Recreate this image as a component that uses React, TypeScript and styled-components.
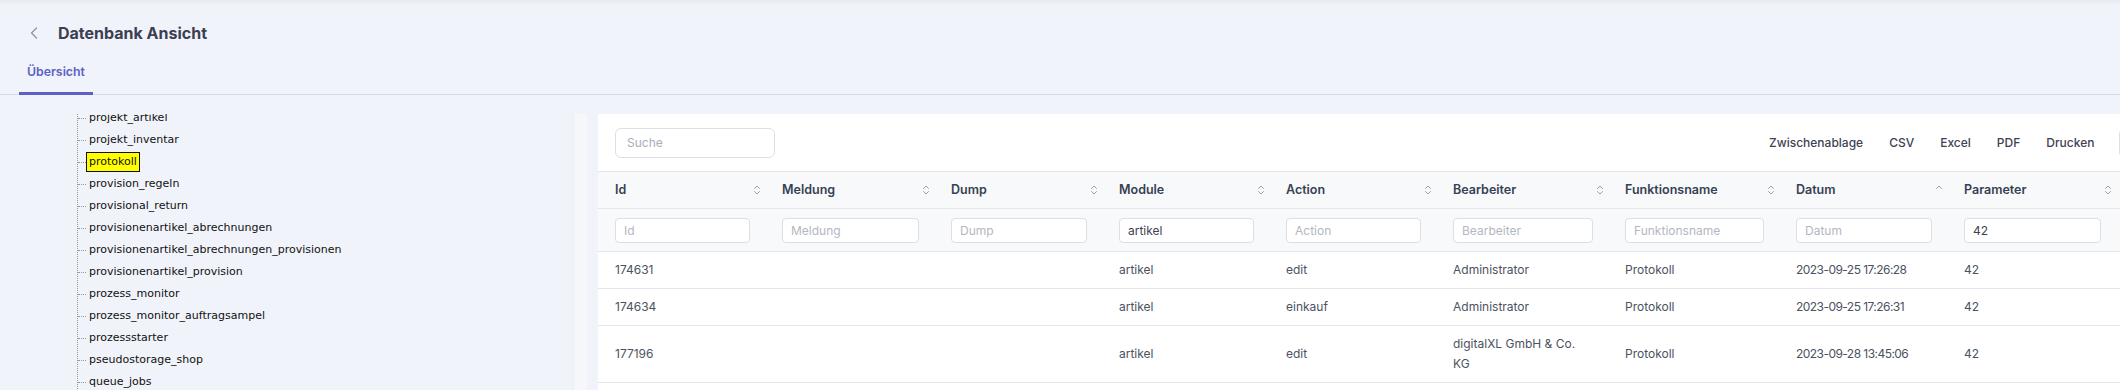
import React from "react";
import styled, { createGlobalStyle } from "styled-components";

const GlobalStyle = createGlobalStyle`
  html, body { margin: 0; padding: 0; overflow: hidden; background: #f0f3fa; }
  body { font-family: Inter, "Noto Sans", sans-serif; }
  * { box-sizing: border-box; }
`;

const Page = styled.div`
  width: 2120px;
  height: 390px;
  overflow: hidden;
  background: linear-gradient(#e7e9ef 0px, #f0f3fa 5px);
  display: flex;
  flex-direction: column;
`;

const TitleRow = styled.div`
  display: flex;
  align-items: center;
  gap: 20px;
  height: 22px;
  margin-top: 22px;
  padding-left: 30px;
`;

const BackButton = styled.span`
  display: flex;
  width: 8px;
  height: 12px;
  color: #8a8fa3;
`;

const Title = styled.h1`
  margin: 0;
  font-size: 16px;
  line-height: 22px;
  font-weight: 700;
  color: #3b3f51;
`;

const Tabs = styled.div`
  display: flex;
  height: 51px;
  padding-left: 19px;
  border-bottom: 1px solid #d8dce7;
`;

const Tab = styled.div<{ $active?: boolean }>`
  padding: 20px 8px 12px;
  line-height: 16px;
  font-size: 12.3px;
  font-weight: 600;
  color: ${(p) => (p.$active ? "#5b5fc7" : "#7e8299")};
  border-bottom: 3px solid ${(p) => (p.$active ? "#5b5fc7" : "transparent")};
  margin-bottom: -1px;
`;

const Content = styled.div`
  display: flex;
  padding-top: 19px;
  flex: 1;
  min-height: 0;
`;

const TreePanel = styled.div`
  display: flex;
  width: 587px;
  flex-shrink: 0;
`;

const TreeScroll = styled.div`
  flex: 1;
  overflow: hidden;
`;

const ScrollTrack = styled.div`
  width: 14px;
  background: #f6f7fa;
  border-left: 1px solid #eceef3;
`;

const TreeList = styled.ul`
  list-style: none;
  margin: -7px 0 0 77px;
  padding: 0;
  border-left: 1px dotted #9a9a9a;
`;

const TreeItem = styled.li`
  display: flex;
  align-items: center;
  height: 22px;
`;

const Connector = styled.span`
  width: 8px;
  height: 0;
  border-top: 1px dotted #9a9a9a;
`;

const Anchor = styled.span<{ $selected?: boolean }>`
  font-family: "DejaVu Sans", Verdana, sans-serif;
  font-size: 11px;
  line-height: 18px;
  padding: 0 2px;
  color: #111;
  border: 1px solid ${(p) => (p.$selected ? "#111" : "transparent")};
  background: ${(p) => (p.$selected ? "#ffff00" : "transparent")};
  white-space: nowrap;
`;

const Card = styled.div`
  width: 1608px;
  flex-shrink: 0;
  margin-left: 11px;
  background: #ffffff;
`;

const Toolbar = styled.div`
  display: flex;
  align-items: center;
  height: 57px;
  padding: 0 17px;
`;

const SearchInput = styled.input`
  width: 160px;
  height: 30px;
  border: 1px solid #dcdfe6;
  border-radius: 6px;
  padding: 0 11px;
  font-family: Inter, sans-serif;
  font-size: 12px;
  color: #3f4254;
  background: #fff;
  outline: none;
  &::placeholder { color: #a9adb9; }
`;

const ButtonGroup = styled.div`
  margin-left: auto;
  display: flex;
  align-items: center;
`;

const ToolButton = styled.button<{ $outlined?: boolean }>`
  height: 30px;
  padding: 0 12px;
  margin-left: ${(p) => (p.$outlined ? "12px" : "0")};
  border: 1px solid ${(p) => (p.$outlined ? "#dcdfe6" : "transparent")};
  border-radius: 6px;
  background: transparent;
  font-family: Inter, sans-serif;
  font-size: 12px;
  font-weight: 500;
  color: #3f4254;
  white-space: nowrap;
`;

const Table = styled.table`
  width: 100%;
  table-layout: fixed;
  border-collapse: separate;
  border-spacing: 0;
  font-family: Inter, sans-serif;
  font-size: 12px;
`;

const HeadCell = styled.th`
  padding: 10px 4px 10px 17px;
  line-height: 16px;
  text-align: left;
  font-size: 12.5px;
  font-weight: 600;
  color: #364152;
  background: #f8f9fb;
  border-top: 1px solid #e4e6ec;
  border-bottom: 1px solid #e4e6ec;
`;

const HeadInner = styled.div`
  display: flex;
  align-items: center;
  justify-content: space-between;
`;

const FilterCell = styled.td`
  padding: 9px 15px 8px 17px;
  background: #f8f9fb;
  border-bottom: 1px solid #e4e6ec;
`;

const FilterInput = styled.input`
  display: block;
  width: 100%;
  height: 25px;
  border: 1px solid #dcdfe6;
  border-radius: 4px;
  padding: 0 8px;
  font-family: Inter, sans-serif;
  font-size: 12px;
  color: #3f4254;
  background: #fff;
  outline: none;
  &::placeholder { color: #b3b7c2; }
`;

const DataCell = styled.td<{ $wrapNarrow?: boolean; $tight?: boolean }>`
  padding: 8px ${(p) => (p.$wrapNarrow ? "30px" : "12px")} 8px 17px;
  line-height: 20px;
  color: #4b5260;
  letter-spacing: ${(p) => (p.$tight ? "-0.55px" : "normal")};
  white-space: ${(p) => (p.$wrapNarrow ? "normal" : "nowrap")};
  border-bottom: 1px solid #e4e6ec;
  vertical-align: middle;
`;

const SortIcon = ({ asc }: { asc?: boolean }) => (
  <svg width="8" height="12" viewBox="0 0 8 12" fill="none" stroke="#9ba1ad" strokeWidth="1" strokeLinecap="round" strokeLinejoin="round">
    <path d="M1.5 4.5 4 2l2.5 2.5" />
    {!asc && <path d="M1.5 7.5 4 10l2.5-2.5" />}
  </svg>
);

const treeItems = [
  "projekt_artikel",
  "projekt_inventar",
  "protokoll",
  "provision_regeln",
  "provisional_return",
  "provisionenartikel_abrechnungen",
  "provisionenartikel_abrechnungen_provisionen",
  "provisionenartikel_provision",
  "prozess_monitor",
  "prozess_monitor_auftragsampel",
  "prozessstarter",
  "pseudostorage_shop",
  "queue_jobs",
];

type Column = { name: string; width: number; filter: string; asc?: boolean; wrap?: boolean; tight?: boolean };

const columns: Column[] = [
  { name: "Id", width: 167, filter: "" },
  { name: "Meldung", width: 169, filter: "" },
  { name: "Dump", width: 168, filter: "" },
  { name: "Module", width: 167, filter: "artikel" },
  { name: "Action", width: 167, filter: "" },
  { name: "Bearbeiter", width: 172, filter: "", wrap: true },
  { name: "Funktionsname", width: 171, filter: "" },
  { name: "Datum", width: 168, filter: "", asc: true, tight: true },
  { name: "Parameter", width: 169, filter: "42" },
];

const rows = [
  ["174631", "", "", "artikel", "edit", "Administrator", "Protokoll", "2023-09-25 17:26:28", "42"],
  ["174634", "", "", "artikel", "einkauf", "Administrator", "Protokoll", "2023-09-25 17:26:31", "42"],
  ["177196", "", "", "artikel", "edit", "digitalXL GmbH & Co. KG", "Protokoll", "2023-09-28 13:45:06", "42"],
  ["177201", "", "", "artikel", "edit", "Administrator", "Protokoll", "2023-09-28 13:47:12", "42"],
];

export default function App() {
  return (
    <>
      <GlobalStyle />
      <Page>
        <TitleRow>
          <BackButton>
            <svg width="8" height="12" viewBox="0 0 8 12" fill="none" stroke="currentColor" strokeWidth="1.2" strokeLinecap="round" strokeLinejoin="round">
              <path d="M6.5 1 1.5 6l5 5" />
            </svg>
          </BackButton>
          <Title>Datenbank Ansicht</Title>
        </TitleRow>
        <Tabs>
          <Tab $active>Übersicht</Tab>
        </Tabs>
        <Content>
          <TreePanel>
            <TreeScroll>
              <TreeList>
                {treeItems.map((t) => (
                  <TreeItem key={t}>
                    <Connector />
                    <Anchor $selected={t === "protokoll"}>{t}</Anchor>
                  </TreeItem>
                ))}
              </TreeList>
            </TreeScroll>
            <ScrollTrack />
          </TreePanel>
          <Card>
            <Toolbar>
              <SearchInput placeholder="Suche" />
              <ButtonGroup>
                <ToolButton>Zwischenablage</ToolButton>
                <ToolButton>CSV</ToolButton>
                <ToolButton>Excel</ToolButton>
                <ToolButton>PDF</ToolButton>
                <ToolButton>Drucken</ToolButton>
                <ToolButton $outlined>Spalten</ToolButton>
              </ButtonGroup>
            </Toolbar>
            <Table>
              <colgroup>
                {columns.map((c) => (
                  <col key={c.name} style={{ width: c.width }} />
                ))}
                <col />
              </colgroup>
              <thead>
                <tr>
                  {columns.map((c) => (
                    <HeadCell key={c.name}>
                      <HeadInner>
                        <span>{c.name}</span>
                        <SortIcon asc={c.asc} />
                      </HeadInner>
                    </HeadCell>
                  ))}
                  <HeadCell />
                </tr>
                <tr>
                  {columns.map((c) => (
                    <FilterCell key={c.name}>
                      <FilterInput placeholder={c.name} defaultValue={c.filter} />
                    </FilterCell>
                  ))}
                  <FilterCell />
                </tr>
              </thead>
              <tbody>
                {rows.map((r) => (
                  <tr key={r[0]}>
                    {r.map((v, i) => (
                      <DataCell key={i} $wrapNarrow={columns[i].wrap} $tight={columns[i].tight}>
                        {v}
                      </DataCell>
                    ))}
                    <DataCell />
                  </tr>
                ))}
              </tbody>
            </Table>
          </Card>
        </Content>
      </Page>
    </>
  );
}
